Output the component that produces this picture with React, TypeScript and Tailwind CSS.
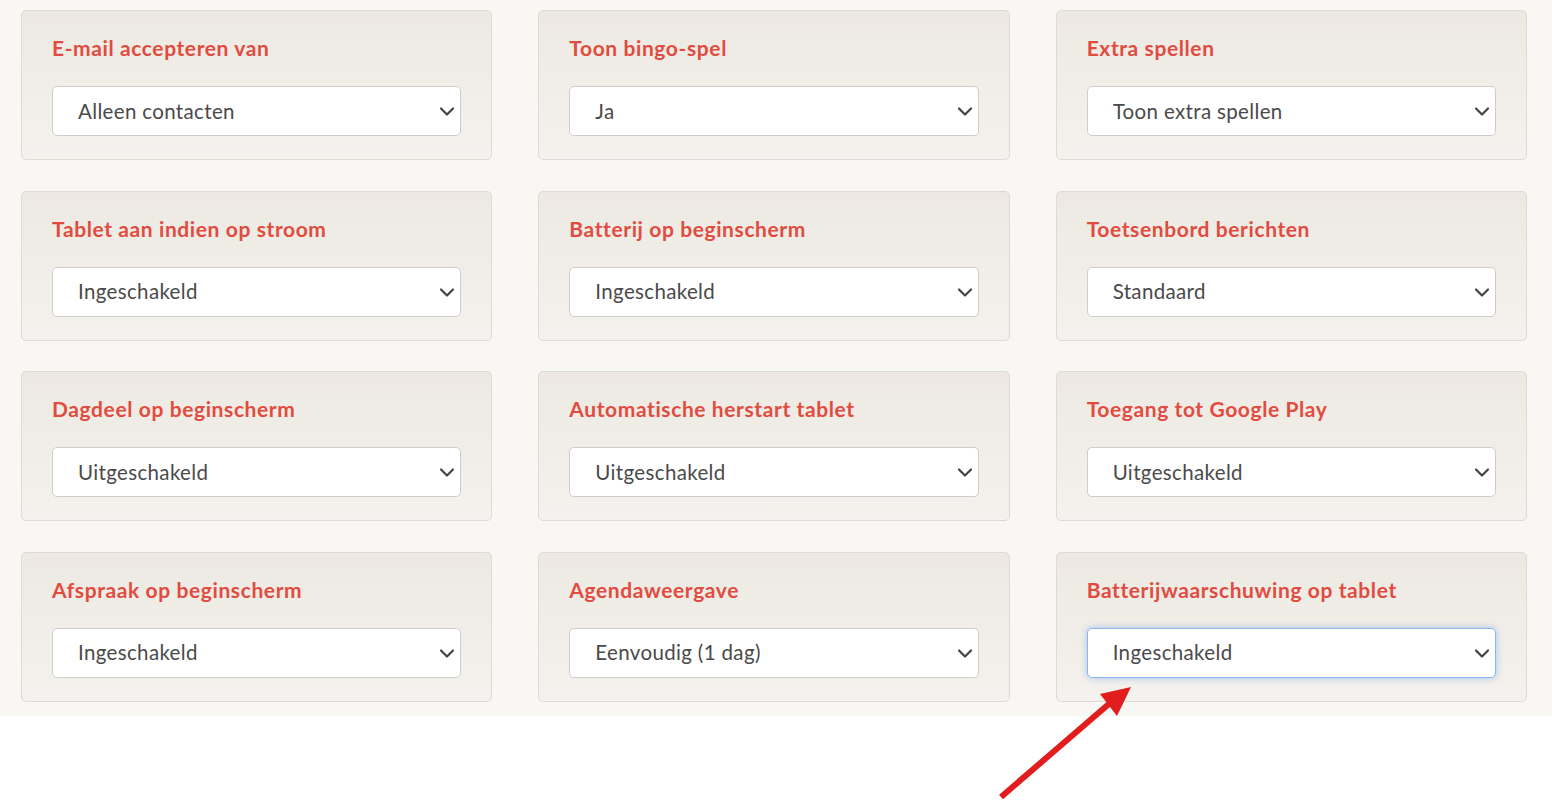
type Setting = {
  label: string;
  value: string;
  options: string[];
  focused?: boolean;
};

const ONOFF = ["Ingeschakeld", "Uitgeschakeld"];

const SETTINGS: Setting[] = [
  { label: "E-mail accepteren van", value: "Alleen contacten", options: ["Iedereen", "Alleen contacten", "Niemand"] },
  { label: "Toon bingo-spel", value: "Ja", options: ["Ja", "Nee"] },
  { label: "Extra spellen", value: "Toon extra spellen", options: ["Toon extra spellen", "Verberg extra spellen"] },
  { label: "Tablet aan indien op stroom", value: "Ingeschakeld", options: ONOFF },
  { label: "Batterij op beginscherm", value: "Ingeschakeld", options: ONOFF },
  { label: "Toetsenbord berichten", value: "Standaard", options: ["Standaard", "Groot"] },
  { label: "Dagdeel op beginscherm", value: "Uitgeschakeld", options: ONOFF },
  { label: "Automatische herstart tablet", value: "Uitgeschakeld", options: ONOFF },
  { label: "Toegang tot Google Play", value: "Uitgeschakeld", options: ONOFF },
  { label: "Afspraak op beginscherm", value: "Ingeschakeld", options: ONOFF },
  { label: "Agendaweergave", value: "Eenvoudig (1 dag)", options: ["Eenvoudig (1 dag)", "Week"] },
  { label: "Batterijwaarschuwing op tablet", value: "Ingeschakeld", options: ONOFF, focused: true },
];

function Card({ s }: { s: Setting }) {
  return (
    <div className="h-[150px] rounded-[5px] border border-[#dedad4] bg-linear-to-b from-[#ede9e2] to-[#f4f2ee] px-[30px] pt-[23px]">
      <h3 className="text-[21px] leading-[28px] font-bold tracking-[0.6px] text-[#e24b40]">{s.label}</h3>
      <div className="relative mt-[24px]">
        <select
          defaultValue={s.value}
          className={`h-[50px] w-full appearance-none rounded-[5px] border bg-white pl-[25px] pr-10 text-[20.5px] tracking-[0.35px] text-[#4a4a4a] outline-none ${
            s.focused
              ? "border-[#86b7f0] shadow-[0_0_7px_rgba(70,140,230,0.45)]"
              : "border-[#cfcccc]"
          }`}
        >
          {s.options.map((o) => (
            <option key={o}>{o}</option>
          ))}
        </select>
        <svg
          viewBox="0 0 16 16"
          className="pointer-events-none absolute right-[6px] top-1/2 h-[16px] w-[16px] -translate-y-1/2 text-[#444]"
          fill="none"
          stroke="currentColor"
          strokeWidth="2.2"
        >
          <path d="M2 5.5l6 6 6-6" strokeLinecap="round" strokeLinejoin="round" />
        </svg>
      </div>
    </div>
  );
}

export default function App() {
  return (
    <div className="relative min-h-[801px] bg-white font-['Lato','Noto_Sans',sans-serif]">
      <div className="grid grid-cols-3 gap-x-[46px] gap-y-[30.5px] bg-[#f9f7f3] pb-[14px] pl-[21px] pr-[25px] pt-[10px]">
        {SETTINGS.map((s) => (
          <Card key={s.label} s={s} />
        ))}
      </div>

      {/* annotation arrow */}
      <svg className="pointer-events-none absolute left-0 top-0" width="1552" height="801" viewBox="0 0 1552 801">
        <line x1="1001" y1="797" x2="1110" y2="703" stroke="#e21d1d" strokeWidth="6" strokeLinecap="butt" />
        <polygon points="1131,687 1100,694 1117,716" fill="#e21d1d" />
      </svg>
    </div>
  );
}
